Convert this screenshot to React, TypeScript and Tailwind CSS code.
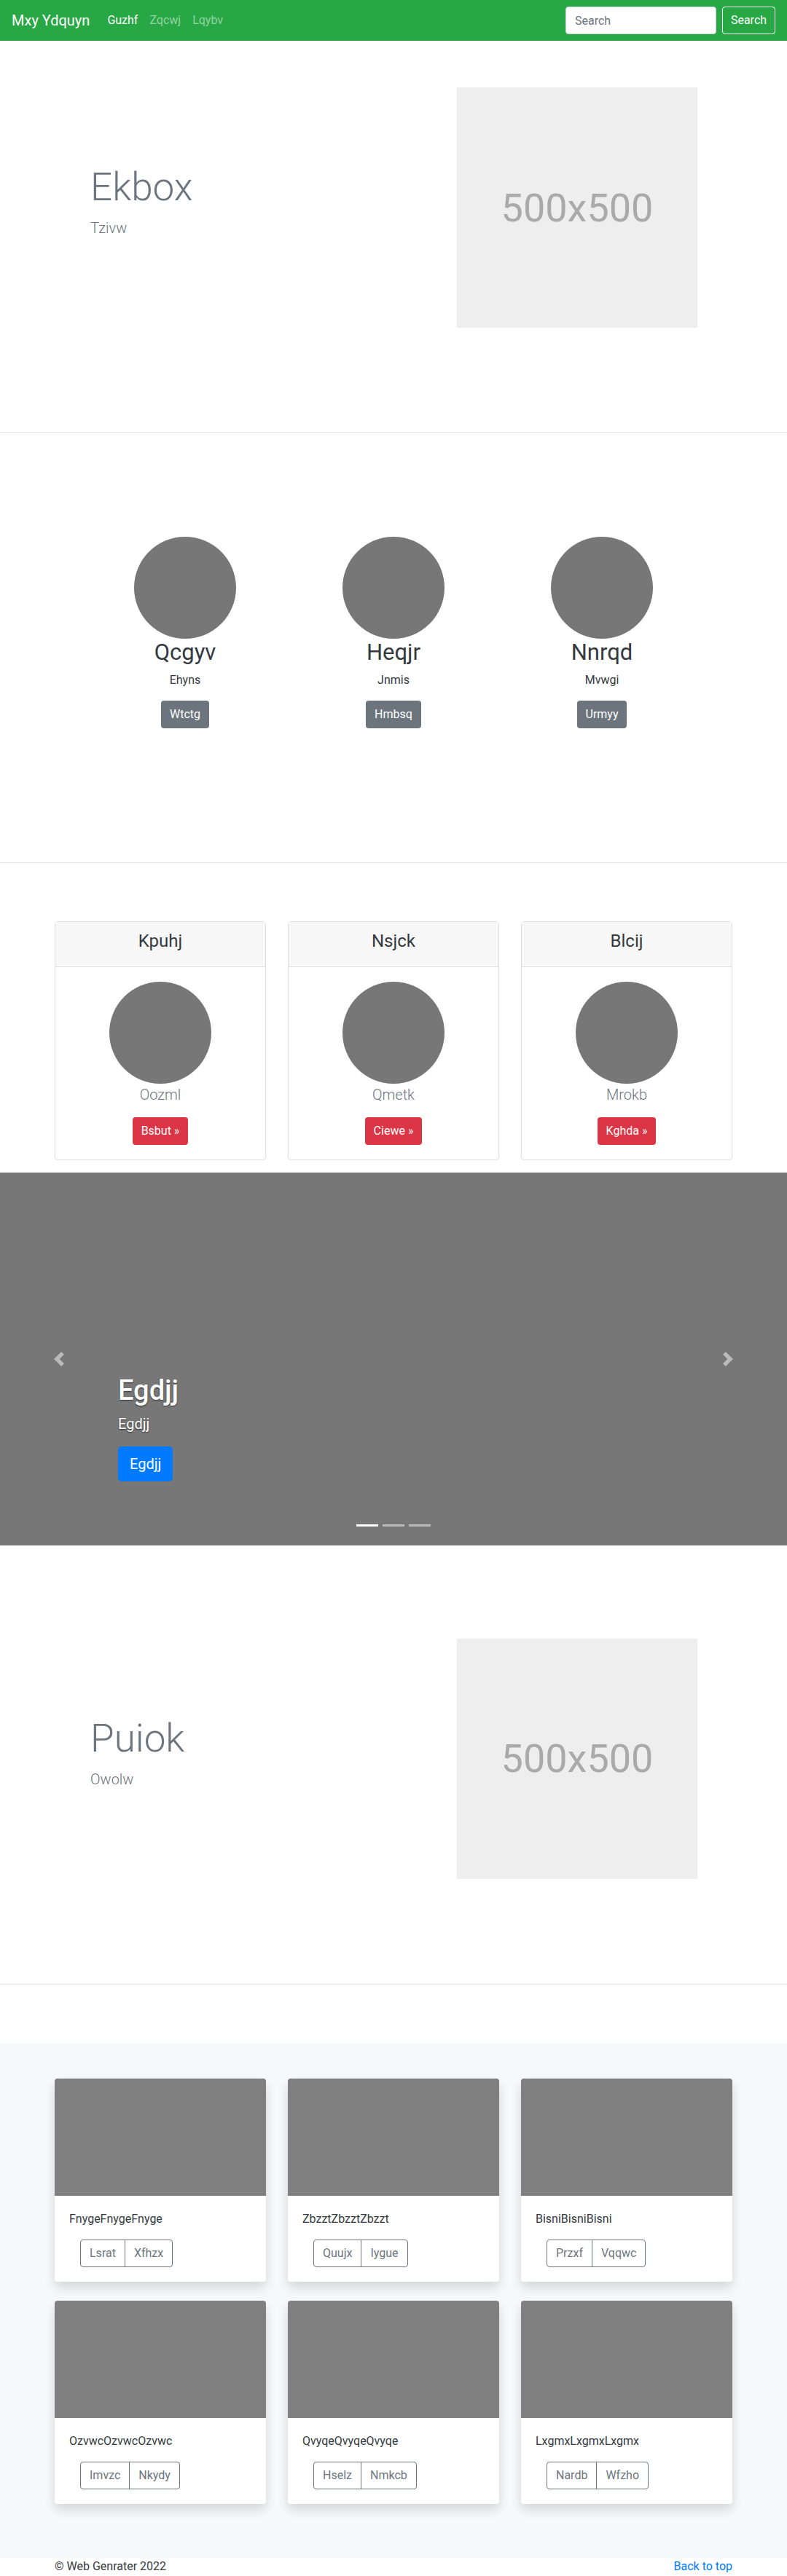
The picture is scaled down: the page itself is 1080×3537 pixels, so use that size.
const features = [
  { title: "Qcgyv", text: "Ehyns", btn: "Wtctg" },
  { title: "Heqjr", text: "Jnmis", btn: "Hmbsq" },
  { title: "Nnrqd", text: "Mvwgi", btn: "Urmyy" },
];

const pricing = [
  { title: "Kpuhj", text: "Oozml", btn: "Bsbut" },
  { title: "Nsjck", text: "Qmetk", btn: "Ciewe" },
  { title: "Blcij", text: "Mrokb", btn: "Kghda" },
];

const album = [
  { text: "FnygeFnygeFnyge", a: "Lsrat", b: "Xfhzx" },
  { text: "ZbzztZbzztZbzzt", a: "Quujx", b: "Iygue" },
  { text: "BisniBisniBisni", a: "Przxf", b: "Vqqwc" },
  { text: "OzvwcOzvwcOzvwc", a: "Imvzc", b: "Nkydy" },
  { text: "QvyqeQvyqeQvyqe", a: "Hselz", b: "Nmkcb" },
  { text: "LxgmxLxgmxLxgmx", a: "Nardb", b: "Wfzho" },
];

function Navbar() {
  return (
    <nav className="h-14 bg-[#28a745] flex items-center px-4">
      <a className="text-xl leading-[30px] text-white mr-4">Mxy Ydquyn</a>
      <a className="px-2 text-base text-white">Guzhf</a>
      <a className="px-2 text-base text-white/50">Zqcwj</a>
      <a className="px-2 text-base text-white/50">Lqybv</a>
      <div className="ml-auto flex items-center">
        <input
          placeholder="Search"
          className="w-[207px] h-[38px] bg-white rounded border border-[#ced4da] px-3 text-base text-[#495057] placeholder:text-[#6c757d] outline-none"
        />
        <button className="ml-2 w-[73px] h-[38px] rounded border border-white text-white text-base">Search</button>
      </div>
    </nav>
  );
}

function Hero({ title, sub, pad }: { title: string; sub: string; pad: string }) {
  return (
    <section className={pad}>
      <div className="flex items-center pl-[124px]">
        <div className="w-[503px]">
          <h1 className="text-[53px] leading-[1.2] font-light text-[#6c757d] mb-2">{title}</h1>
          <p className="text-xl leading-[30px] font-light text-[#6c757d] mb-4">{sub}</p>
        </div>
        <div className="w-[330px] h-[330px] bg-[#eee] flex items-center justify-center text-[54px] text-[#aaa]">
          500x500
        </div>
      </div>
    </section>
  );
}

function Rule() {
  return <div className="h-px bg-[#e6e6e6]" />;
}

function Features() {
  return (
    <section className="pt-[143px] pb-[184px]">
      <div className="w-[858px] mx-auto grid grid-cols-3">
        {features.map((f) => (
          <div key={f.title} className="flex flex-col items-center text-center">
            <div className="w-[140px] h-[140px] rounded-full bg-[#777]" />
            <h2 className="text-[31px] leading-[1.2] mb-2 text-[#343a40]">{f.title}</h2>
            <p className="text-base leading-6 mb-4 text-[#343a40]">{f.text}</p>
            <button className="h-[38px] px-3 rounded bg-[#6c757d] text-white text-base">{f.btn}</button>
          </div>
        ))}
      </div>
    </section>
  );
}

function Pricing() {
  return (
    <section className="pt-[80px] pb-[17px]">
      <div className="w-[930px] mx-auto grid grid-cols-3 gap-[30px]">
        {pricing.map((p) => (
          <div key={p.title} className="border border-[#dfdfdf] rounded bg-white text-center">
            <div className="bg-[#f7f7f7] border-b border-[#dfdfdf] px-5 pt-3 pb-5">
              <h4 className="text-2xl leading-[1.2] text-[#343a40]">{p.title}</h4>
            </div>
            <div className="p-5 flex flex-col items-center">
              <div className="w-[140px] h-[140px] rounded-full bg-[#777]" />
              <p className="text-xl leading-[30px] font-light text-[#6c757d] mb-4">{p.text}</p>
              <button className="h-[38px] px-3 rounded bg-[#dc3545] text-white text-base">{p.btn} »</button>
            </div>
          </div>
        ))}
      </div>
    </section>
  );
}

function Carousel() {
  return (
    <section className="h-[512px] bg-[#777] flex">
      <div className="w-[162px] flex items-center justify-center opacity-50">
        <svg viewBox="0 0 8 8" className="w-5 h-5" fill="#fff">
          <path d="M5.25 0l-4 4 4 4 1.5-1.5L4.25 4l2.5-2.5L5.25 0z" />
        </svg>
      </div>
      <div className="flex-1 flex flex-col justify-end">
        <h1 className="text-[38px] leading-[46px] font-medium text-white mb-2 [text-shadow:0_1px_2px_rgba(0,0,0,0.6)]">
          Egdjj
        </h1>
        <p className="text-xl leading-[30px] text-white mb-4 [text-shadow:0_1px_2px_rgba(0,0,0,0.6)]">Egdjj</p>
        <button className="self-start h-12 px-4 rounded-[5px] bg-[#007bff] text-white text-xl">Egdjj</button>
        <div className="mt-[59px] mb-[26px] flex justify-center gap-[6px]">
          <span className="w-[30px] h-[3px] bg-white" />
          <span className="w-[30px] h-[3px] bg-white/50" />
          <span className="w-[30px] h-[3px] bg-white/50" />
        </div>
      </div>
      <div className="w-[162px] flex items-center justify-center opacity-50">
        <svg viewBox="0 0 8 8" className="w-5 h-5" fill="#fff">
          <path d="M2.75 0l-1.5 1.5L3.75 4l-2.5 2.5L2.75 8l4-4-4-4z" />
        </svg>
      </div>
    </section>
  );
}

function Album() {
  return (
    <section className="mt-[80px] bg-[#f8f9fa] pt-[49px] pb-[74px]">
      <div className="w-[930px] mx-auto grid grid-cols-3 gap-x-[30px] gap-y-[26px]">
        {album.map((c) => (
          <div key={c.text} className="bg-white rounded overflow-hidden shadow-[0_0.5rem_1rem_rgba(0,0,0,0.15)]">
            <div className="h-[161px] bg-[#808080]" />
            <div className="p-5">
              <p className="text-base leading-6 text-[#343a40] mb-4">{c.text}</p>
              <div className="ml-[15px] inline-flex h-[38px] border border-[#6c757d] rounded text-[#6c757d] text-base">
                <span className="px-3 flex items-center border-r border-[#6c757d]">{c.a}</span>
                <span className="px-3 flex items-center">{c.b}</span>
              </div>
            </div>
          </div>
        ))}
      </div>
    </section>
  );
}

export default function App() {
  return (
    <div className="font-[Roboto,'Helvetica_Neue',Arial,sans-serif] text-[#212529] bg-white">
      <Navbar />
      <Hero title="Ekbox" sub="Tzivw" pad="pt-[64px] pb-[143px]" />
      <Rule />
      <Features />
      <Rule />
      <Pricing />
      <Carousel />
      <Hero title="Puiok" sub="Owolw" pad="pt-[128px] pb-[144px]" />
      <Rule />
      <Album />
      <footer className="w-[930px] mx-auto h-6 flex justify-between text-base leading-6">
        <span className="text-[#343a40]">© Web Genrater 2022</span>
        <a className="text-[#007bff]">Back to top</a>
      </footer>
    </div>
  );
}
